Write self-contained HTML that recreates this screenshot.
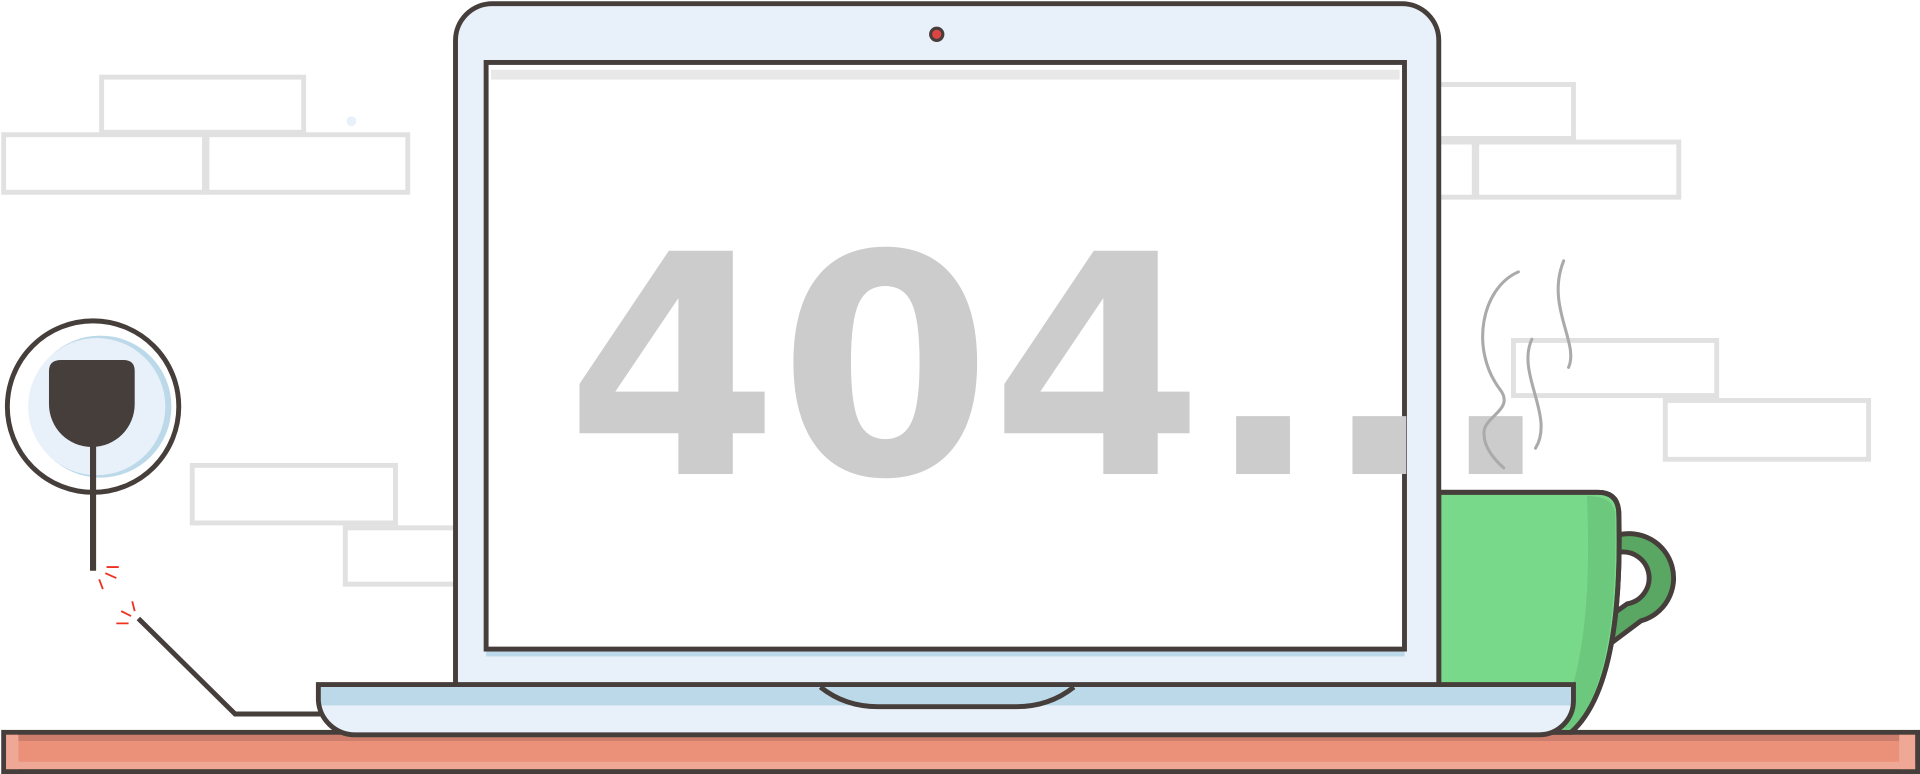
<!DOCTYPE html>
<html><head><meta charset="utf-8"><style>html,body{margin:0;padding:0;background:#fff;overflow:hidden}svg{display:block}</style></head>
<body>
<svg width="1920" height="774" viewBox="0 0 1568 632" preserveAspectRatio="none" xmlns="http://www.w3.org/2000/svg">
<g fill="none" stroke="#e1e1e1" stroke-width="4">
<rect x="83" y="63" width="165" height="45"/>
<rect x="3" y="110" width="164" height="47"/>
<rect x="169" y="110" width="164" height="47"/>
<rect x="1150" y="69" width="135" height="44"/>
<rect x="1150" y="116" width="54" height="45"/>
<rect x="1206" y="116" width="165" height="45"/>
<rect x="1236" y="278" width="166" height="45"/>
<rect x="1360" y="327" width="166" height="48"/>
<rect x="157" y="380" width="166" height="47"/>
<rect x="282" y="431" width="90" height="46"/>
</g>
<circle cx="287" cy="99" r="4" fill="#e8f0f9"/>
<!-- plug -->
<circle cx="76" cy="332" r="70" fill="#fff"/>
<circle cx="82" cy="332" r="58" fill="#bcd9ea"/>
<circle cx="79" cy="332" r="56" fill="#e8f0f9"/>
<circle cx="76" cy="332" r="70" fill="none" stroke="#463e3b" stroke-width="4"/>
<path d="M50 294 H101 Q110 294 110 303 V330 A34 34 0 0 1 40 330 V303 Q40 294 50 294Z" fill="#463e3b"/>
<path d="M76 360 V466" stroke="#463e3b" stroke-width="5"/>
<g stroke="#e32" stroke-width="1.5">
<path d="M87 463 H97 M86 468 L95 472 M81 473 L84 481 M108 491 L110 499 M99 499 L107 503 M95 509 H105"/>
</g>
<path d="M113 505 L192 583 H265" fill="none" stroke="#463e3b" stroke-width="4"/>
<!-- desk -->
<rect x="3" y="598" width="1563" height="32" fill="#eb917a" stroke="#463e3b" stroke-width="4"/>
<rect x="5" y="600" width="1559" height="5" fill="#b87060" opacity=".6"/>
<rect x="5" y="600" width="10" height="28" fill="#f0a896"/>
<rect x="1551" y="600" width="13" height="28" fill="#f0a896"/>
<rect x="5" y="622" width="1559" height="6" fill="#f0a896"/>
<!-- mug handle -->
<path d="M1321 437 A35 35 0 0 1 1340 507 L1316 525 L1319 500 L1329 493 A21 21 0 0 0 1322 451Z" fill="#5aa663" stroke="#463e3b" stroke-width="4" stroke-linejoin="round"/>
<!-- mug -->
<path d="M1175 402 H1305 Q1321 402 1322 418 Q1326 560 1283 598 H1175Z" fill="#79d98b" stroke="#463e3b" stroke-width="4"/>
<path d="M1296 405 Q1318 405 1319 420 Q1322 555 1284 595 H1270 Q1302 540 1296 405Z" fill="#6cc87c"/>
<path d="M1175 402 H1305 Q1321 402 1322 418 Q1326 560 1283 598" fill="none" stroke="#463e3b" stroke-width="4"/>
<!-- laptop lid -->
<path d="M372 560 V33 A30 30 0 0 1 402 3 H1145 A30 30 0 0 1 1175 33 V560Z" fill="#e8f0f9" stroke="#463e3b" stroke-width="4"/>
<circle cx="765" cy="28" r="5" fill="#d44" stroke="#463e3b" stroke-width="2.5"/>
<rect x="397" y="530" width="750" height="6" fill="#bcd9ea"/>
<rect x="397" y="51" width="750" height="479" fill="#fff" stroke="#463e3b" stroke-width="4"/>
<rect x="401" y="57" width="742" height="8" fill="#e8e8e8"/>
<g font-family="'DejaVu Sans','Liberation Sans',sans-serif" font-weight="bold" font-size="250" fill="#cccccc">
<text x="462" y="387">4</text>
<text x="636" y="387">0</text>
<text x="809" y="387">4</text>
<text x="984" y="387">.</text>
<text x="1079" y="387">.</text>
<text x="1174" y="387">.</text>
</g>
<!-- steam -->
<g fill="none" stroke="#aaa" stroke-width="2.5" stroke-linecap="round">
<path d="M1240 222 C1210 235 1200 285 1225 318 C1238 335 1210 340 1212 355 C1212 365 1220 375 1228 382"/>
<path d="M1277 213 C1262 250 1290 280 1281 300"/>
<path d="M1251 277 C1238 305 1270 340 1254 366"/>
</g>
<!-- base -->
<path d="M260 559 H1285 V572 A28 28 0 0 1 1257 600 H290 A30 30 0 0 1 260 572Z" fill="#e8f0f9"/>
<rect x="262" y="561" width="1021" height="15" fill="#bcd9ea"/>
<path d="M260 559 H1285 V572 A28 28 0 0 1 1257 600 H290 A30 30 0 0 1 260 572Z" fill="none" stroke="#463e3b" stroke-width="4"/>
<path d="M670 561 Q690 577 717 577 H830 Q857 577 877 561" fill="#bcd9ea" stroke="#463e3b" stroke-width="4"/>
</svg>
</body></html>
